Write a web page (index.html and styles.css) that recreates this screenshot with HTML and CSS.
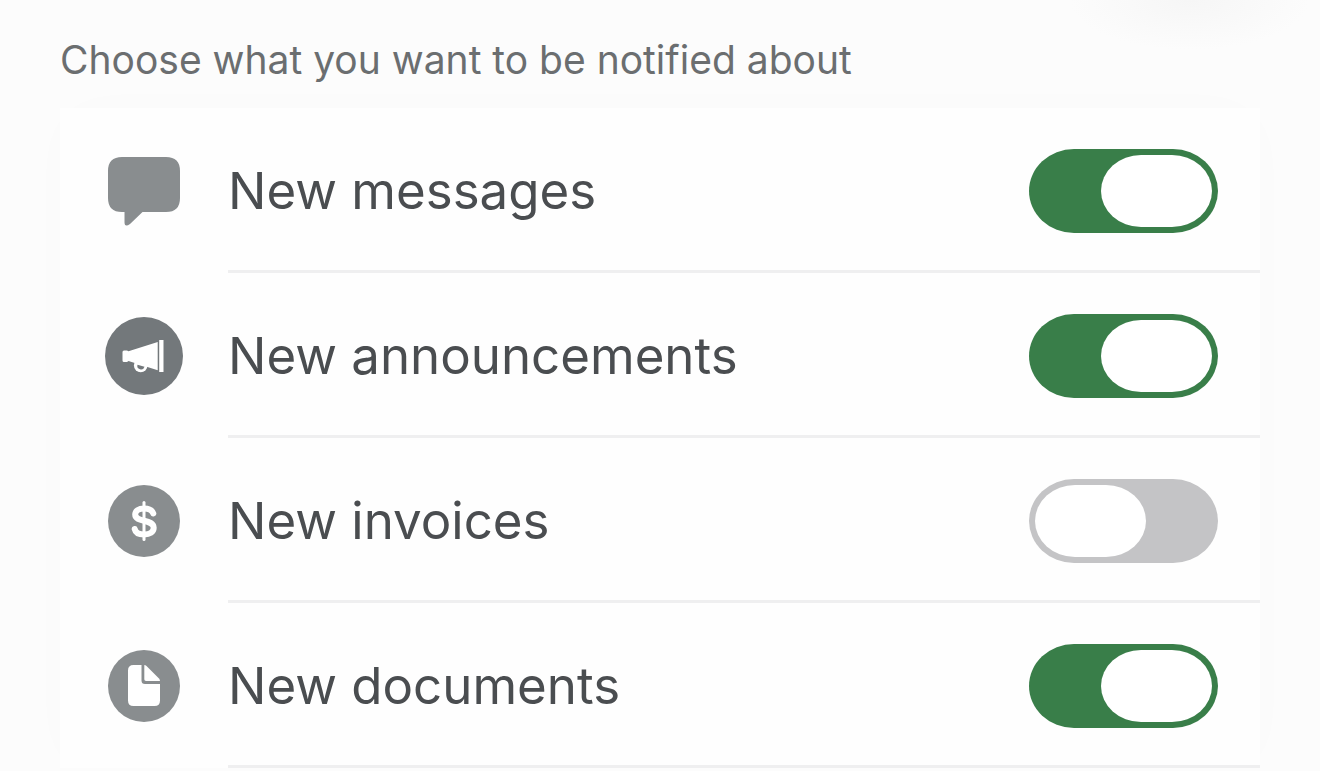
FILE: index.html
```html
<!DOCTYPE html>
<html lang="en">
<head>
<meta charset="utf-8">
<meta name="viewport" content="width=device-width, initial-scale=1">
<title>Notifications</title>
<link rel="stylesheet" href="styles.css">
</head>
<body>
<main class="settings">
  <h1 class="heading">Choose what you want to be notified about</h1>
  <ul class="list">
    <li class="row">
      <svg class="icon" viewBox="0 0 80 80" aria-hidden="true">
        <path fill="#898d8f" d="M18 6H62Q76 6 76 20V47Q76 61 62 61H38.500L26 73Q20.500 77 20.500 71V61H18Q4 61 4 47V20Q4 6 18 6Z"/>
      </svg>
      <div class="content">
        <label class="label" for="messages">New messages</label>
        <input class="switch" type="checkbox" role="switch" id="messages" checked>
      </div>
    </li>
    <li class="row">
      <svg class="icon" viewBox="0 0 80 80" aria-hidden="true">
        <circle cx="40" cy="40" r="39" fill="#73787b"/>
        <circle cx="36.700" cy="49.500" r="6.800" fill="#fff"/>
        <path fill="#fff" d="M18.500 36Q18.500 34.500 20 34.500H23L24.500 35.300L53.700 26V54.300L24.500 45L23 46H20Q18.500 46 18.500 44.500Z"/>
        <path fill="#73787b" d="M33.500 48.700L40.500 50.700A3.600 3.600 0 0 1 33.500 48.700Z"/>
        <path fill="#fff" d="M55.200 24H59.500V56H55.200Z"/>
      </svg>
      <div class="content">
        <label class="label" for="announcements">New announcements</label>
        <input class="switch" type="checkbox" role="switch" id="announcements" checked>
      </div>
    </li>
    <li class="row">
      <svg class="icon" viewBox="0 0 80 80" aria-hidden="true">
        <circle cx="40" cy="40" r="36" fill="#898d8f"/>
        <g fill="none" stroke="#fff" stroke-linecap="round">
          <path stroke-width="6" d="M49.300 32.500C48 28.800 44.500 27.500 40.200 27.500C34.500 27.500 31.200 30 31.200 33.600C31.200 42 49.700 37.500 49.700 46.800C49.700 51.300 45.500 53.500 40.200 53.500C35 53.500 31.500 51.500 30.700 48"/>
          <path stroke-width="3" d="M40 21.500V58.500"/>
        </g>
      </svg>
      <div class="content">
        <label class="label" for="invoices">New invoices</label>
        <input class="switch" type="checkbox" role="switch" id="invoices">
      </div>
    </li>
    <li class="row">
      <svg class="icon" viewBox="0 0 80 80" aria-hidden="true">
        <circle cx="40" cy="40" r="36" fill="#898d8f"/>
        <path fill="#fff" d="M29.500 19H37.500V34.500Q37.500 38 41 38H56V54.500Q56 60 50.500 60H29.500Q24 60 24 54.500V24.500Q24 19 29.500 19Z"/>
        <path fill="#fff" d="M40.300 19Q41.500 19 42.500 20L55 32.500Q56 33.500 56 35H42Q40.300 35 40.300 33.300Z"/>
      </svg>
      <div class="content">
        <label class="label" for="documents">New documents</label>
        <input class="switch" type="checkbox" role="switch" id="documents" checked>
      </div>
    </li>
  </ul>
</main>
</body>
</html>
```
FILE: styles.css
```css
* {
  box-sizing: border-box;
}

body {
  margin: 0;
  background: radial-gradient(ellipse 120px 50px at calc(100% - 130px) 0, #f6f6f6, transparent) no-repeat #fcfcfc;
  font-family: Inter, sans-serif;
}

.settings {
  padding: 36px 60px 0;
}

.heading {
  margin: 0 0 24px;
  font-size: 39px;
  line-height: 48px;
  font-weight: 400;
  color: #6b6e70;
}

.list {
  margin: 0;
  padding: 0;
  list-style: none;
  background: #fefefe;
  box-shadow: 0 0 60px rgba(0, 0, 0, 0.012);
}

.row {
  display: flex;
  padding-left: 44px;
}

.icon {
  flex: none;
  width: 80px;
  height: 80px;
  margin: 43px 44px 0 0;
}

.content {
  display: flex;
  flex: 1;
  align-items: center;
  justify-content: space-between;
  padding: 41px 42px 37px 0;
  border-bottom: 3px solid #efeff0;
}

.label {
  font-size: 51px;
  line-height: 64px;
  color: #4a4d50;
}

.switch {
  appearance: none;
  display: flex;
  flex: none;
  width: 189px;
  height: 84px;
  margin: 0;
  padding: 6px;
  border-radius: 45px / 42px;
  background: #c4c4c6;
  cursor: pointer;
}

.switch::before {
  content: "";
  width: 111px;
  border-radius: 40px / 36px;
  background: #fff;
}

.switch:checked {
  justify-content: flex-end;
  background: #397e49;
}
```
